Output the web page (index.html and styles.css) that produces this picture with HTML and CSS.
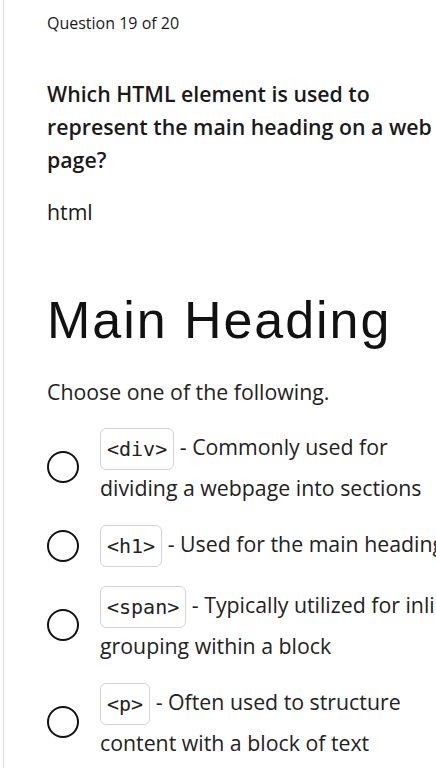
FILE: index.html
```html
<!DOCTYPE html>
<html lang="en">
<head>
  <meta charset="UTF-8" />
  <meta name="viewport" content="width=device-width, initial-scale=1.0" />
  <title>Quiz - Question 19</title>
  <link rel="stylesheet" href="styles.css">
</head>
<body>
  <div class="quiz">
    <p class="counter">Question 19 of 20</p>
    <h2 class="question">Which HTML element is used to represent the main heading on a web page?</h2>
    <p class="answer-tag">html</p>
    <h1 class="demo-heading">Main Heading</h1>
    <p class="prompt">Choose one of the following.</p>

    <ul class="options">
      <li class="option">
        <span class="radio"></span>
        <p class="option-text"><code>&lt;div&gt;</code> - Commonly used for dividing a webpage into sections</p>
      </li>
      <li class="option">
        <span class="radio"></span>
        <p class="option-text"><code>&lt;h1&gt;</code> - Used for the main heading</p>
      </li>
      <li class="option">
        <span class="radio"></span>
        <p class="option-text"><code>&lt;span&gt;</code> - Typically utilized for inline grouping within a block</p>
      </li>
      <li class="option">
        <span class="radio"></span>
        <p class="option-text"><code>&lt;p&gt;</code> - Often used to structure content with a block of text</p>
      </li>
    </ul>
  </div>
</body>
</html>
```

FILE: styles.css
```css
* { box-sizing: border-box; margin: 0; padding: 0; }
html, body { overflow-x: hidden; }
body { background: #fff; color: #222; font-family: 'Open Sans', sans-serif; }

/* the card runs a little wider than a phone screen */
.quiz { margin-left: 3px; border-left: 1px solid #dcdcdc; min-height: 768px; width: 461px; padding: 11px 0 0 43px; }

.counter { font-size: 16px; line-height: 24px; color: #1a1a1a; }
.question { margin-top: 42px; font-size: 21.3px; line-height: 33px; font-weight: 600; color: #1a1a1a; }
.answer-tag { margin-top: 19px; font-size: 21.3px; line-height: 33px; color: #1a1a1a; }
.demo-heading { margin-top: 62px; font-family: 'Liberation Sans', Arial, sans-serif; font-weight: 400; font-size: 52px; line-height: 60px; letter-spacing: 1.95px; color: #111; }
.prompt { margin-top: 27px; font-size: 21.3px; line-height: 30px; color: #222; }

.options { list-style: none; margin-top: 21px; display: flex; flex-direction: column; gap: 19px; }
.option { display: flex; align-items: center; gap: 21px; }
.radio { flex: none; width: 32px; height: 32px; border: 2.5px solid #111; border-radius: 50%; }
.option-text { font-size: 21.3px; line-height: 36px; color: #222; }
.option-text code { display: inline-block; vertical-align: middle; font-family: 'DejaVu Sans Mono', monospace; font-size: 20px; line-height: 24px; padding: 8px 6px; border: 1px solid #d4d4d4; border-radius: 6px; color: #222; }
```
